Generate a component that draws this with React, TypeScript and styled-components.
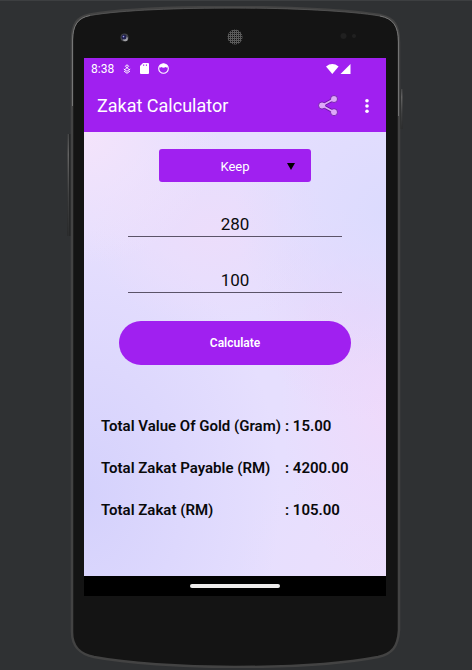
import React, { useState } from "react";
import styled, { createGlobalStyle } from "styled-components";

const PURPLE = "#a020f0";

const GlobalStyle = createGlobalStyle`
  * { box-sizing: border-box; }
  body {
    margin: 0;
    background: #2f3133;
    font-family: Roboto, "Liberation Sans", sans-serif;
  }
`;

const Desk = styled.div`
  min-height: 100vh;
  padding: 5px 72px 2px 70px;
  border-top: 1px solid #3d3f41;
  background: #2f3133;
`;

const Phone = styled.div`
  position: relative;
  padding: 0 14px 72px;
`;

const DeviceArt = styled.svg`
  position: absolute;
  inset: 0 -4px;
  width: calc(100% + 8px);
  height: 100%;
`;

const Sensors = styled.div`
  position: relative;
  display: flex;
  align-items: center;
  justify-content: space-between;
  height: 52px;
  padding: 10px 30px 0 36px;
`;

const Screen = styled.main`
  position: relative;
  display: flex;
  flex-direction: column;
`;

const StatusBar = styled.div`
  display: flex;
  align-items: center;
  justify-content: space-between;
  height: 21px;
  padding: 0 35px 0 7px;
  background: ${PURPLE};
  color: #fff;
  font-size: 12px;
`;

const StatusGroup = styled.div<{ $gap: number }>`
  display: flex;
  align-items: center;
  gap: ${(p) => p.$gap}px;
`;

const AppBar = styled.header`
  display: flex;
  align-items: center;
  height: 53px;
  padding: 0 13px 0 13px;
  background: ${PURPLE};
`;

const Title = styled.h1`
  flex: 1;
  margin: 0;
  color: #fff;
  font-size: 18px;
  line-height: 24px;
  font-weight: 400;
`;

const IconButton = styled.button<{ $space?: number }>`
  display: flex;
  margin: 0 0 0 ${(p) => p.$space ?? 0}px;
  padding: 0;
  border: 0;
  background: none;
`;

const Content = styled.section`
  padding: 17px 16px 56px;
  background:
    radial-gradient(ellipse 45% 30% at 0% 0%, #f4e4fb 0%, #f4e4fb00 100%),
    radial-gradient(ellipse 50% 35% at 100% 18%, #dcdbfe 0%, #dcdbfe00 100%),
    radial-gradient(ellipse 35% 24% at 92% 41%, #ead7fb 0%, #ead7fb00 100%),
    radial-gradient(ellipse 40% 22% at 42% 22%, #ecddfb 0%, #ecddfb00 100%),
    radial-gradient(ellipse 65% 60% at 0% 82%, #d4d1fc 0%, #d4d1fc00 100%),
    radial-gradient(ellipse 35% 40% at 100% 62%, #efdafb 0%, #efdafb00 100%),
    radial-gradient(ellipse 50% 30% at 100% 100%, #ecdffc 0%, #ecdffc00 100%),
    #e6dffe;
`;

const Form = styled.form`
  display: flex;
  flex-direction: column;
  align-items: center;
`;

const SelectBox = styled.div`
  position: relative;
  width: 56%;
`;

const Select = styled.select`
  appearance: none;
  display: block;
  width: 100%;
  height: 33px;
  padding: 2px 0 0;
  border: 0;
  border-radius: 3px;
  background: ${PURPLE};
  color: #fff;
  font: 400 13px Roboto, sans-serif;
  text-align: center;
  text-align-last: center;
`;

const Caret = styled.svg`
  position: absolute;
  top: 14px;
  right: 16px;
  pointer-events: none;
`;

const NumberField = styled.input<{ $space: number }>`
  width: 79%;
  height: 32px;
  margin-top: ${(p) => p.$space}px;
  padding: 8px 0 2px;
  border: 0;
  border-bottom: 1px solid #5b5368;
  border-radius: 0;
  outline: 0;
  background: transparent;
  color: #0b0b0d;
  font: 400 17px Roboto, sans-serif;
  text-align: center;
`;

const CalculateButton = styled.button`
  width: 86%;
  height: 44px;
  margin-top: 28px;
  border: 0;
  border-radius: 22px;
  background: ${PURPLE};
  color: #fff;
  font: 600 12px Roboto, sans-serif;
`;

const Results = styled.dl`
  display: grid;
  grid-template-columns: 184px 1fr;
  row-gap: 22px;
  margin: 51px 0 0;
  padding-left: 1px;
  color: #09090b;
  font-size: 15px;
  line-height: 20px;
  font-weight: 600;
  white-space: nowrap;
`;

const ResultName = styled.dt``;

const ResultValue = styled.dd`
  margin: 0;
`;

const NavBar = styled.div`
  display: flex;
  align-items: center;
  justify-content: center;
  height: 20px;
  background: #000;
`;

const NavPill = styled.span`
  width: 30%;
  height: 4px;
  border-radius: 2px;
  background: #eeecec;
`;

const edge =
  "M6 34 C6 18 11 11 24 8.5 C55 3 115 1 169 1 C225 1 285 4 314 9 C328 12 333 19 333 36 L333 624 C332 641 326 648 312 651 C270 659 222 661 169 661 C115 661 60 657 28 651 C14 648 6 641 6 626 Z";

function Device() {
  return (
    <DeviceArt viewBox="0 0 338 662" preserveAspectRatio="none" aria-hidden="true">
      <defs>
        <linearGradient id="key" x1="0" y1="0" x2="0" y2="1">
          <stop offset="0" stopColor="#454647" />
          <stop offset="0.2" stopColor="#636363" />
          <stop offset="0.6" stopColor="#404142" />
          <stop offset="1" stopColor="#2c2d2e" />
        </linearGradient>
      </defs>
      <rect x="1" y="128" width="5" height="102" rx="1" fill="#262728" />
      <rect x="1.5" y="128" width="1.5" height="102" fill="url(#key)" />
      <rect x="332" y="83" width="5" height="40" rx="1" fill="#2b2c2d" />
      <rect x="335" y="83" width="1.5" height="40" fill="url(#key)" />
      <path d={edge} fill="#141414" stroke="#434343" strokeWidth="2.5" />
      <path d="M6.5 100 V34 C7 19 11.5 12 24 9.5" fill="none" stroke="#767676" strokeWidth="1" />
      <path d="M24 9.5 C55 4 115 2 169 2 C225 2 285 5 314 10" fill="none" stroke="#585858" strokeWidth="0.8" />
      <path d="M314 10 C327 12.5 332.5 20 332.5 36 V110" fill="none" stroke="#747474" strokeWidth="1" />
    </DeviceArt>
  );
}

function Lens() {
  return (
    <svg width="9" height="9" viewBox="0 0 9 9" aria-hidden="true">
      <circle cx="4.5" cy="4.5" r="4" fill="#44454a" />
      <circle cx="5.3" cy="5.8" r="2.5" fill="#a3a3a8" />
      <circle cx="4" cy="4" r="2.5" fill="#20204c" />
      <circle cx="3.5" cy="3.6" r="0.8" fill="#9c9cf0" />
    </svg>
  );
}

function Speaker() {
  return (
    <svg width="16" height="16" viewBox="0 0 16 16" aria-hidden="true">
      <defs>
        <pattern id="mesh" width="2" height="2" patternUnits="userSpaceOnUse">
          <rect width="2" height="2" fill="#5a5a5a" />
          <rect width="1" height="1" fill="#111" />
        </pattern>
      </defs>
      <circle cx="8" cy="8" r="7.5" fill="url(#mesh)" />
    </svg>
  );
}

function ProximitySensors() {
  return (
    <svg width="16" height="8" viewBox="0 0 16 8" aria-hidden="true">
      <circle cx="3.5" cy="3" r="3" fill="#202020" />
      <circle cx="14" cy="3" r="2" fill="#202020" />
    </svg>
  );
}

function DebugIcon() {
  return (
    <svg width="8" height="10" viewBox="0 0 8 10" fill="none" stroke="#fff" aria-hidden="true">
      <path d="M4 .7 L5.6 2.3 L2.2 5.2 M4 .7 L2.4 2.3 L5.8 5.2" />
      <path d="M.8 5 L4 7.3 L7.2 5 M1 7 L4 9.3 L7 7" />
    </svg>
  );
}

function CardIcon() {
  return (
    <svg width="9" height="11" viewBox="0 0 9 11" aria-hidden="true">
      <path d="M3 0 H8 Q9 0 9 1 V10 Q9 11 8 11 H1 Q0 11 0 10 V3 Z" fill="#fff" />
      <path d="M3.7 1.4 V3 M6.4 1.4 V3" stroke={PURPLE} strokeWidth="0.9" />
    </svg>
  );
}

function FaceIcon() {
  return (
    <svg width="11" height="11" viewBox="0 0 11 11" aria-hidden="true">
      <circle cx="5.5" cy="5.5" r="4.8" fill="none" stroke="#fff" strokeWidth="1.1" />
      <path d="M1.3 4.2 Q1.5 1 5.5 .7 Q9.5 1 9.7 4.2 Q8.5 5 7.8 4 Q5.5 5.4 3.2 4 Q2.4 5 1.3 4.2 Z" fill="#fff" />
    </svg>
  );
}

function SignalIcons() {
  return (
    <svg width="25" height="10" viewBox="0 0 25 10" fill="#fff" aria-hidden="true">
      <path d="M0 2.4 Q6.3 -2.3 12.6 2.4 L6.3 10 Z" />
      <path d="M24.5 0 V10 H14.5 Z" />
    </svg>
  );
}

function ShareIcon() {
  return (
    <svg width="20" height="22" viewBox="0 0 20 22" aria-hidden="true">
      <path d="M16 4 L4 10.5 L16 17" fill="none" stroke="#6916a2" strokeWidth="3.2" />
      <g fill="#dda9f8" stroke="#6916a2" strokeWidth="0.8">
        <circle cx="16" cy="4" r="3.5" />
        <circle cx="4" cy="10.5" r="3.5" />
        <circle cx="16" cy="17.2" r="3.5" />
      </g>
      <path d="M16 4 L4 10.5 L16 17" fill="none" stroke="#dda9f8" strokeWidth="1.6" />
    </svg>
  );
}

function MoreIcon() {
  return (
    <svg width="12" height="16" viewBox="0 0 12 16" fill="#fff" aria-hidden="true">
      <circle cx="6" cy="2.8" r="1.8" />
      <circle cx="6" cy="8" r="1.8" />
      <circle cx="6" cy="13.2" r="1.8" />
    </svg>
  );
}

export default function App() {
  const [kind, setKind] = useState("Keep");
  const [price, setPrice] = useState("280");
  const [weight, setWeight] = useState("100");
  const [totals, setTotals] = useState({ gold: 15, payable: 4200, zakat: 105 });

  const calculate = (event: React.FormEvent) => {
    event.preventDefault();
    const gold = Math.max(0, Number(weight) - (kind === "Keep" ? 85 : 200));
    const payable = gold * Number(price);
    setTotals({ gold, payable, zakat: payable * 0.025 });
  };

  const rows: [string, number][] = [
    ["Total Value Of Gold (Gram)", totals.gold],
    ["Total Zakat Payable (RM)", totals.payable],
    ["Total Zakat (RM)", totals.zakat],
  ];

  return (
    <Desk>
      <GlobalStyle />
      <Phone>
        <Device />
        <Sensors>
          <Lens />
          <Speaker />
          <ProximitySensors />
        </Sensors>
        <Screen>
          <StatusBar>
            <StatusGroup $gap={9}>
              <span>8:38</span>
              <DebugIcon />
              <CardIcon />
              <FaceIcon />
            </StatusGroup>
            <SignalIcons />
          </StatusBar>
          <AppBar>
            <Title>Zakat Calculator</Title>
            <IconButton aria-label="Share"><ShareIcon /></IconButton>
            <IconButton aria-label="More options" $space={23}><MoreIcon /></IconButton>
          </AppBar>
          <Content>
            <Form onSubmit={calculate}>
              <SelectBox>
                <Select aria-label="Gold type" value={kind} onChange={(e) => setKind(e.target.value)}>
                  <option>Keep</option>
                  <option>Wear</option>
                </Select>
                <Caret width="8" height="7" viewBox="0 0 8 7" aria-hidden="true">
                  <path d="M0 0 H8 L4 7 Z" fill="#000" />
                </Caret>
              </SelectBox>
              <NumberField $space={23} aria-label="Gold value per gram" inputMode="decimal" value={price} onChange={(e) => setPrice(e.target.value)} />
              <NumberField $space={24} aria-label="Gold weight in grams" inputMode="decimal" value={weight} onChange={(e) => setWeight(e.target.value)} />
              <CalculateButton type="submit">Calculate</CalculateButton>
            </Form>
            <Results>
              {rows.map(([name, value]) => (
                <React.Fragment key={name}>
                  <ResultName>{name}</ResultName>
                  <ResultValue>: {value.toFixed(2)}</ResultValue>
                </React.Fragment>
              ))}
            </Results>
          </Content>
          <NavBar><NavPill /></NavBar>
        </Screen>
      </Phone>
    </Desk>
  );
}
